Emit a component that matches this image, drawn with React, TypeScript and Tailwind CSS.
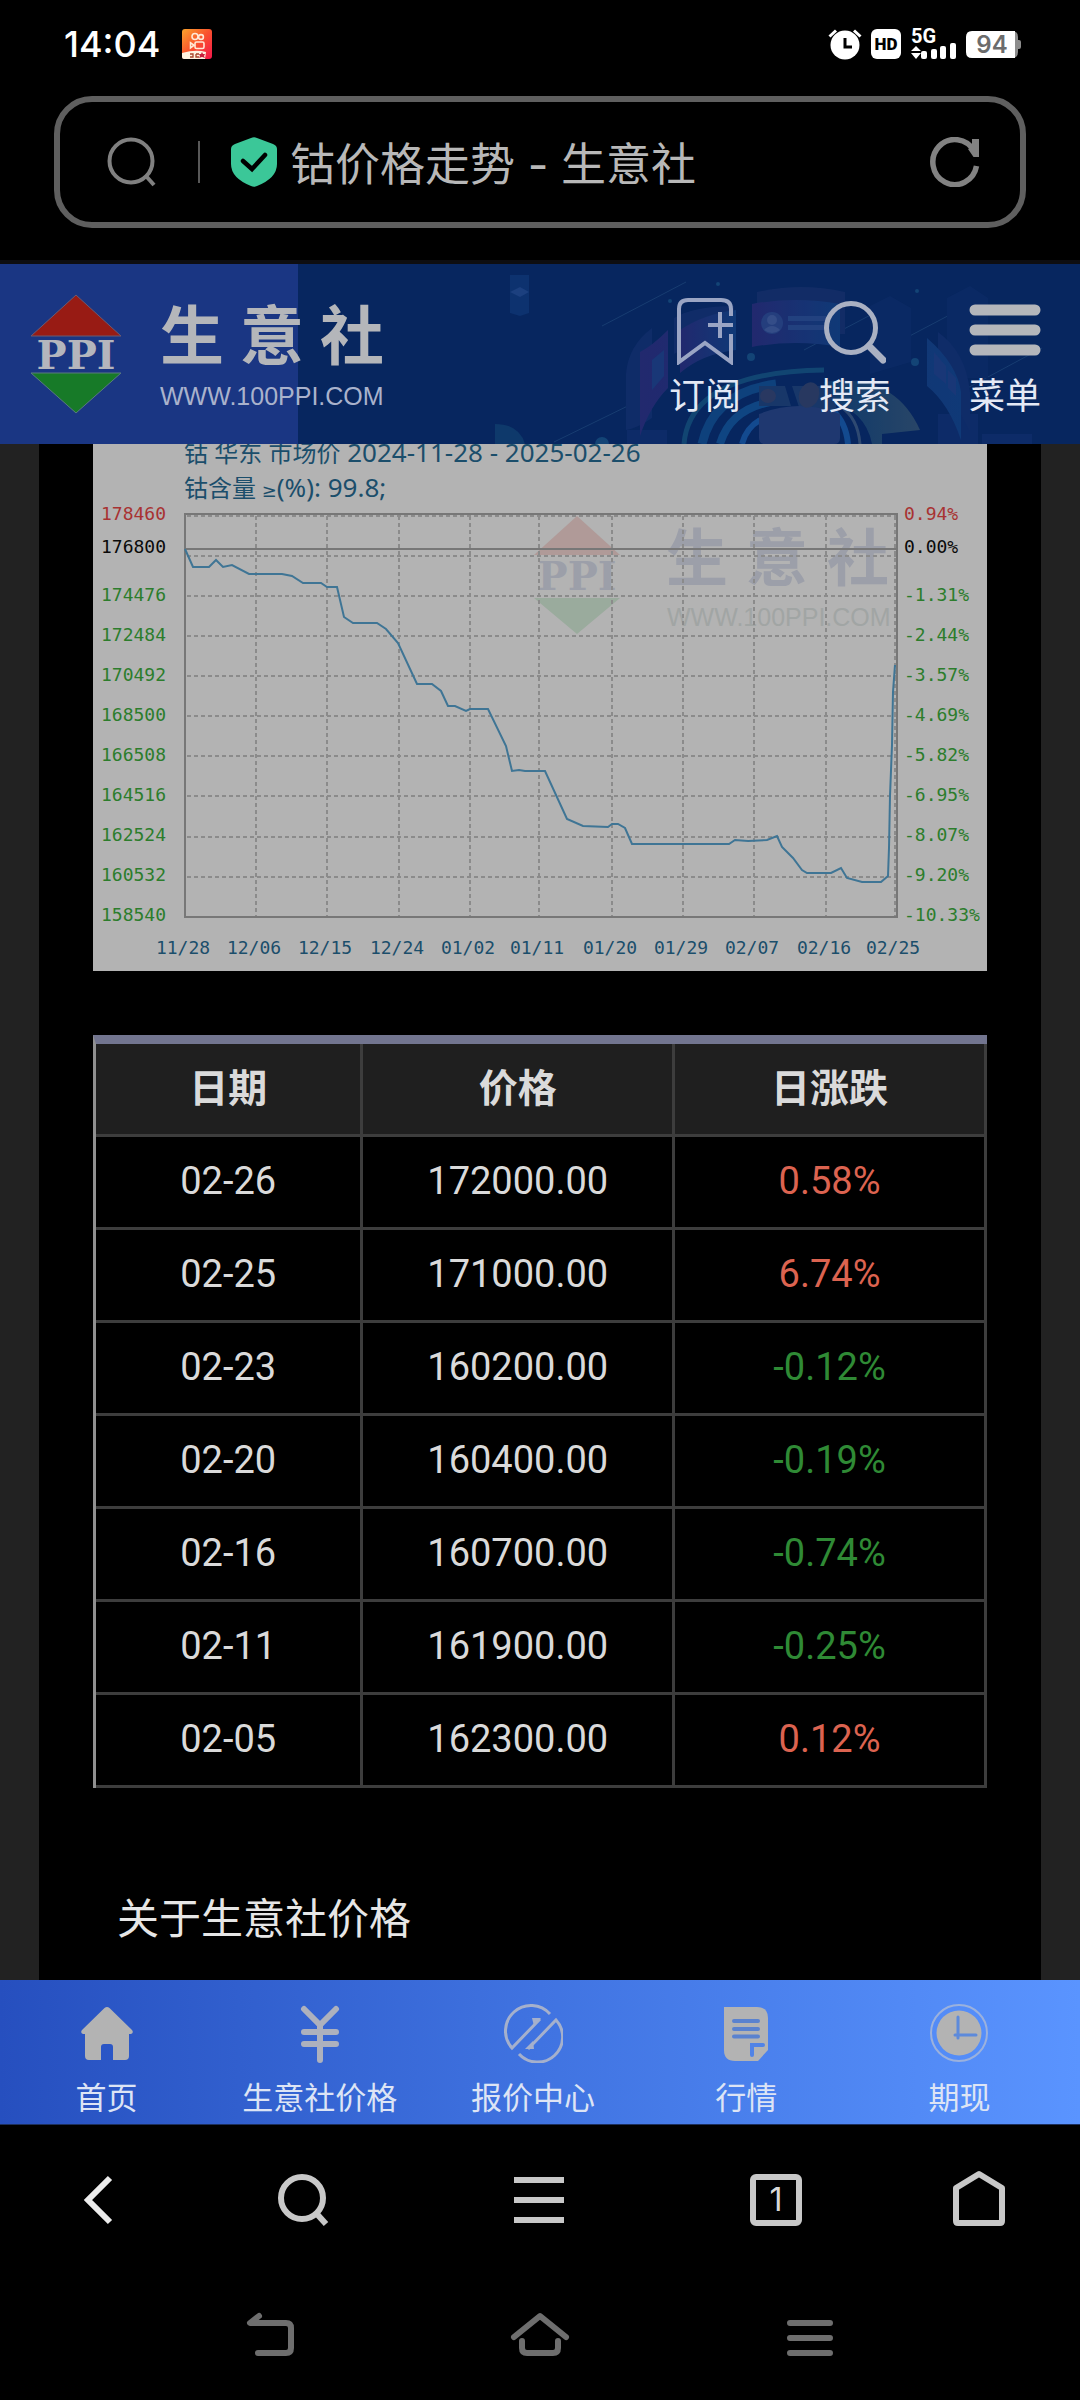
import type { ReactNode } from "react";

interface PriceRow {
  date: string;
  price: string;
  change: string;
}

const rows: PriceRow[] = [
  { date: "02-26", price: "172000.00", change: "0.58%" },
  { date: "02-25", price: "171000.00", change: "6.74%" },
  { date: "02-23", price: "160200.00", change: "-0.12%" },
  { date: "02-20", price: "160400.00", change: "-0.19%" },
  { date: "02-16", price: "160700.00", change: "-0.74%" },
  { date: "02-11", price: "161900.00", change: "-0.25%" },
  { date: "02-05", price: "162300.00", change: "0.12%" },
];

// y = text baseline inside the chart
const scaleLabels = [
  { price: "178460", percent: "0.94%", y: 76, color: "#a83232" },
  { price: "176800", percent: "0.00%", y: 109, color: "#0a0a0a" },
  { price: "174476", percent: "-1.31%", y: 157, color: "#2c7d2c" },
  { price: "172484", percent: "-2.44%", y: 197, color: "#2c7d2c" },
  { price: "170492", percent: "-3.57%", y: 237, color: "#2c7d2c" },
  { price: "168500", percent: "-4.69%", y: 277, color: "#2c7d2c" },
  { price: "166508", percent: "-5.82%", y: 317, color: "#2c7d2c" },
  { price: "164516", percent: "-6.95%", y: 357, color: "#2c7d2c" },
  { price: "162524", percent: "-8.07%", y: 397, color: "#2c7d2c" },
  { price: "160532", percent: "-9.20%", y: 437, color: "#2c7d2c" },
  { price: "158540", percent: "-10.33%", y: 477, color: "#2c7d2c" },
];

const dateLabels = [
  { label: "11/28", x: 92 },
  { label: "12/06", x: 163 },
  { label: "12/15", x: 234 },
  { label: "12/24", x: 306 },
  { label: "01/02", x: 377 },
  { label: "01/11", x: 446 },
  { label: "01/20", x: 519 },
  { label: "01/29", x: 590 },
  { label: "02/07", x: 661 },
  { label: "02/16", x: 733 },
  { label: "02/25", x: 802 },
];

const gridRows = [72, 112, 152, 192, 232, 272, 312, 352, 393, 433];

const pricePoints =
  "92,105 100,123 116,123 123,116 130,123 139,121 156,130 189,130 199,132 210,139 228,139 234,143 244,143 251,173 260,179 284,179 293,185 305,199 324,240 339,240 348,247 355,262 362,262 373,267 377,265 395,265 413,302 419,327 426,326 432,327 452,327 474,375 490,382 515,383 519,380 525,380 532,384 539,400 636,400 642,396 655,397 674,396 684,392 689,403 700,414 709,426 714,429 738,429 748,424 754,434 769,438 788,438 795,432 796,404 797,352 799,301 800,248 802,221";

function StatusBar() {
  return (
    <div className="flex h-[84px] items-center justify-between pr-[59px] pl-16 pt-1">
      <div className="flex items-center gap-[22px]">
        <span className="font-['Inter'] text-[36px] leading-none font-medium text-white">14:04</span>
        <svg className="h-[30px] w-[30px]" viewBox="0 0 30 30" fill="none">
          <defs>
            <linearGradient id="appIcon" x1="0" y1="0" x2="1" y2="1">
              <stop offset="0" stopColor="#fba42c" />
              <stop offset="0.5" stopColor="#f9502e" />
              <stop offset="1" stopColor="#f5174a" />
            </linearGradient>
          </defs>
          <rect width="30" height="30" rx="3" fill="url(#appIcon)" />
          <g stroke="#ffe9d6" strokeWidth="1.6">
            <circle cx="13" cy="7.5" r="3" />
            <circle cx="19" cy="8" r="2.4" />
            <rect x="13" y="13" width="9" height="6.5" rx="1.5" />
            <path d="M12 16.2 8.500 13.800v5z" />
          </g>
          <path d="M0 24q14-4 24-1l-1 7H2q-2 0-2-2z" fill="#fff3e0" />
          <path d="M8 25h3v3H8m6-3h3m-3 0v3h3" stroke="#a8452a" strokeWidth="1.300" />
          <path d="m20 23 1 2h2l-1 2 1 2-3-1-3 1 1-2-1-2h2z" fill="#c81f3a" />
        </svg>
      </div>

      <div className="flex items-center gap-[9px]">
        <svg className="h-8 w-[34px]" viewBox="0 0 34 32" fill="none">
          <circle cx="17" cy="17" r="14.500" fill="#fff" />
          <path d="M1.500 8.500 8 2.500M32.500 8.500 26 2.500" stroke="#fff" strokeWidth="3" />
          <path d="M17 10v9h7" stroke="#000" strokeWidth="3" />
        </svg>
        <svg className="h-[30px] w-[30px]" viewBox="0 0 30 30">
          <rect width="30" height="30" rx="6" fill="#fff" />
          <text x="15" y="21" textAnchor="middle" fontFamily="Roboto, sans-serif" fontSize="17" fontWeight="900">
            HD
          </text>
        </svg>
        <svg className="h-10 w-[47px]" viewBox="0 -4 47 40" fill="#fff">
          <text x="1" y="15" fontFamily="Roboto, sans-serif" fontSize="20" fontWeight="700">
            5G
          </text>
          <path d="m6 18 5 5H1zM1 25h10l-5 6z" />
          <rect x="11" y="23" width="6" height="8" rx="2" />
          <rect x="21" y="21" width="6" height="10" rx="2" />
          <rect x="30" y="18" width="6" height="13" rx="2" />
          <rect x="40" y="15" width="6" height="16" rx="2" />
        </svg>
        <svg className="h-[27px] w-[55px]" viewBox="0 0 55 27">
          <path d="M40 0h6q6 0 6 6v3h1q2 0 2 2v5q0 2-2 2h-1v3q0 6-6 6h-6z" fill="#8c8c8c" />
          <path d="M6 0h43v27H6q-6 0-6-6V6q0-6 6-6" fill="#fff" />
          <text x="26" y="22" textAnchor="middle" fill="#6c6c6c" fontFamily="Inter, sans-serif" fontSize="24" fontWeight="600">
            94
          </text>
        </svg>
      </div>
    </div>
  );
}

function AddressBar() {
  return (
    <div className="px-[54px] pt-3 pb-8">
      <div className="flex h-[132px] items-center rounded-[38px] border-[6px] border-[#5f5f5f] pr-[40px] pl-[47px]">
        <button aria-label="搜索网页">
          <svg className="h-[50px] w-[50px]" viewBox="0 0 50 50" fill="none" stroke="#808080" strokeWidth="4">
            <circle cx="24" cy="24" r="21.500" />
            <path d="m39 39 8 9" />
          </svg>
        </button>
        <span className="ml-[41px] h-[42px] w-0.5 bg-[#585858]" />
        <svg className="ml-[31px] h-[50px] w-[46px]" viewBox="0 0 46 50" fill="none">
          <path
            d="M20 1q3-1.500 6 0l16 6q4 1.500 4 5v15q0 14-20 22-3 1.500-6 0Q0 41 0 27V12q0-3.500 4-5z"
            fill="#3bc798"
          />
          <path d="m12 24 9 8 13-14" stroke="#000" strokeWidth="4.500" strokeLinecap="round" />
        </svg>
        <span className="ml-[13px] flex-1 pt-1 font-['Inter','Noto_Sans_CJK_SC',sans-serif] text-[45px] leading-none whitespace-nowrap text-[#b8b8b8]">
          钴价格走势 - 生意社
        </span>
        <button aria-label="刷新">
          <svg className="h-[50px] w-[50px]" viewBox="0 0 50 50" fill="none" stroke="#828282" strokeWidth="5.500">
            <path d="M46.500 29A22 22.500 0 1 1 44 14" />
            <path d="M42 2h7v18h-5.500L38 12l4-2z" fill="#828282" stroke="none" />
          </svg>
        </button>
      </div>
    </div>
  );
}

// Faint city / dashboard artwork behind the site header
function HeaderArt() {
  return (
    <svg className="absolute top-0 right-0 h-[180px] w-[600px] opacity-75" viewBox="0 0 600 180" fill="none">
      <defs>
        <linearGradient id="panel" x1="0" x2="1">
          <stop offset="0" stopColor="#2b2a74" />
          <stop offset="1" stopColor="#12407f" />
        </linearGradient>
        <linearGradient id="fan" x1="0" x2="1">
          <stop offset="0" stopColor="#0f4070" />
          <stop offset="1" stopColor="#34506a" />
        </linearGradient>
      </defs>
      <g stroke="#1d4477" strokeWidth="1">
        <path d="m122 62 84-44M74 178l86-42M324 86l76-40M422 76l76-40M480 128l82-44" />
      </g>
      <path d="M30 11h19v38l-9 3-10-3z" fill="#0f3675" />
      <path d="m30 28 10-5 9 5-9 5z" fill="#23498a" />
      <path d="M15 160q24 0 30 20H15z" fill="#11406f" />
      <path d="M390 42l20-10 21 12v54l-41 12zM467 34l23-12 18 12v80h-41z" fill="#0c2b66" />
      <path d="M147 166h40v14h-40zM458 150h40v30h-40zM502 170h50v10h-50z" fill="#102d6c" />
      <path d="M146 110q2-28 26-46v90q-14 10-26 12zM458 68q28 20 32 60v40l-32-60z" fill="#122e6c" />
      <path d="M160 88q12-6 28-22v58q-18 18-28 48zM447 74q30 26 34 54v48q-12-36-34-54z" fill="url(#panel)" />
      <path d="M172 96l12-10v26l-12 14zM454 88l12 14v18l-12-10zM468 106l8 8v18l-8-8z" fill="#1f3d80" />
      <path d="M194 54q20-12 60-12v34q-40 2-60 14z" fill="#142f6c" />
      <path d="M200 66q24-16 56-20v40q-34 4-56 23z" fill="url(#panel)" />
      <path d="M277 28q44-10 88 0v42h-88z" fill="#162f69" />
      <path d="M272 40q44-8 88 0v43q-44-8-88 0z" fill="url(#panel)" />
      <circle cx="292" cy="59" r="11" fill="#2e4788" />
      <circle cx="292" cy="56" r="5" fill="#445a96" />
      <path d="M284 66q8-8 16 0-8 6-16 0" fill="#445a96" />
      <path d="M308 52h38v5h-38zM308 61h38v5h-38z" fill="#2b4a8a" />
      <g strokeWidth="6">
        <path d="M204 180q6-72 140-74" stroke="#155079" strokeWidth="5" />
        <path d="M222 180q12-52 74-60" stroke="#114a86" strokeWidth="9" />
        <path d="M240 180q10-34 50-42" stroke="#12508e" strokeWidth="8" />
        <path d="M262 180q4-16 18-24" stroke="#1756a0" />
        <path d="M360 142q18 12 20 38" stroke="#3c5578" strokeWidth="3" />
        <path d="M352 146q14 12 16 34" stroke="#1756a0" />
      </g>
      <path d="M344 118q70-10 96 48l-38 4v10h-10q-6-34-48-46z" fill="url(#fan)" />
      <path d="M279 122h26l6 20h-32zM312 122h44v24h-36z" fill="#1e3d6d" />
      <path d="M279 150q40-16 81 0v24q0 6-6 6h-69q-6 0-6-6z" fill="#273f76" />
      <ellipse cx="288" cy="132" rx="8" ry="7" fill="#353f62" />
      <ellipse cx="329" cy="131" rx="10" ry="13" transform="rotate(20 329 131)" fill="#333f61" />
      <g fill="#174e7e">
        <circle cx="271" cy="93" r="4" />
        <circle cx="435" cy="98" r="4" />
        <circle cx="190" cy="37" r="2" />
        <circle cx="238" cy="20" r="2" />
        <circle cx="437" cy="27" r="2" />
        <circle cx="122" cy="180" r="7" />
      </g>
    </svg>
  );
}

function SiteHeader() {
  return (
    <header className="relative flex h-[180px] items-center bg-[#07265f]">
      <HeaderArt />
      <div className="absolute inset-y-0 left-0 w-[298px] bg-[#1a3683]" />
      <a href="#home" className="relative flex items-center pl-[30px]" aria-label="生意社 首页">
        <svg className="h-[120px] w-[92px]" viewBox="0 0 92 120">
          <path d="m46 1 45 41H1z" fill="#981b14" stroke="#6c5a70" />
          <text
            x="46"
            y="75"
            textAnchor="middle"
            fill="#b4b6bd"
            fontFamily="'DejaVu Serif', serif"
            fontSize="40"
            fontWeight="700"
          >
            PPI
          </text>
          <path d="M1 79h90l-45 40z" fill="#177a28" stroke="#5a7a80" />
        </svg>
        <span className="ml-[38px] flex flex-col gap-3 pt-1">
          <span className="flex gap-4 text-[64px] leading-[68px] font-bold text-[#b4b6ba]">
            <span>生</span>
            <span>意</span>
            <span>社</span>
          </span>
          <span className="font-['Liberation_Sans'] text-[25px] leading-6 text-[#a9b2cc]">WWW.100PPI.COM</span>
        </span>
      </a>

      <nav className="relative ml-auto flex gap-[78px] pt-2 pr-[39px] text-[36px] leading-[44px] text-[#e4e9f5]">
        <button className="flex flex-col items-center gap-[10px]">
          <svg className="h-[68px] w-[60px]" viewBox="0 0 60 68" fill="none" stroke="#9aa5c4" strokeWidth="4">
            <path d="M56 19v-7q0-9-10-9H13Q4 3 4 12v53l26-19 26 19V37" />
            <path d="M33 28h25M45 15v26" />
          </svg>
          订阅
        </button>
        <button className="flex flex-col items-center gap-[10px]">
          <svg className="h-[68px] w-[62px]" viewBox="0 0 62 68" fill="none" stroke="#aab1c3" strokeWidth="5">
            <circle cx="27" cy="31" r="24.500" />
            <path d="m45 49 14 14" strokeWidth="7" strokeLinecap="round" />
          </svg>
          搜索
        </button>
        <button className="flex flex-col items-center gap-[10px]">
          <svg className="h-[68px] w-[72px]" viewBox="0 0 72 68" stroke="#b4b6bb" strokeWidth="11" strokeLinecap="round">
            <path d="M6 13h60M6 33h60M6 53h60" />
          </svg>
          菜单
        </button>
      </nav>
    </header>
  );
}

function PriceChart() {
  return (
    <svg className="block w-full bg-[#b3b3b3]" viewBox="0 0 894 527" fill="none" role="img" aria-label="钴价格走势图">
      {/* watermark */}
      <path d="m484 72 43 39h-86z" fill="#b09a98" />
      <path d="M441 154h86l-43 36z" fill="#9aab9d" />
      <g fill="#9c9fa9">
        <text x="484" y="146" textAnchor="middle" fontFamily="'DejaVu Serif', serif" fontSize="40" fontWeight="700">
          PPI
        </text>
        <g fontFamily="'Noto Sans CJK SC', sans-serif" fontSize="62" fontWeight="700">
          <text x="573" y="137">生</text>
          <text x="653" y="137">意</text>
          <text x="734" y="137">社</text>
        </g>
      </g>
      <text x="574" y="182" fill="#a1a5a4" fontFamily="'Liberation Sans', sans-serif" fontSize="25">
        WWW.100PPI.COM
      </text>

      {/* grid */}
      <g stroke="#8b8b8b" strokeWidth="2" strokeDasharray="4 3">
        {gridRows.map((y) => (
          <path key={y} d={`M94 ${y}H804`} />
        ))}
        {dateLabels.slice(1).map(({ x }) => (
          <path key={x} d={`M${x} 72V473`} />
        ))}
      </g>
      <rect x="92" y="70" width="712" height="403" stroke="#777" strokeWidth="2" />
      <path d="M92 105H804" stroke="#777" strokeWidth="2" />
      <polyline points={pricePoints} stroke="#3f7595" strokeWidth="2" />

      <g fill="#1b4e6b" fontFamily="'Noto Sans', 'Noto Sans CJK SC', sans-serif" fontSize="26">
        <text x="91" y="18">
          <tspan fontSize="24">钴 华东 市场价</tspan> 2024-11-28 - 2025-02-26
        </text>
        <text x="91" y="53">
          <tspan fontSize="24">钴含量</tspan>
          <tspan fontFamily="'DejaVu Sans', sans-serif" fontSize="18">
            {" ≥"}
          </tspan>
          (%): 99.8;
        </text>
      </g>

      <g fontFamily="'DejaVu Sans Mono', monospace" fontSize="18">
        {scaleLabels.map((item) => (
          <g key={item.price} fill={item.color}>
            <text x="8" y={item.y}>
              {item.price}
            </text>
            <text x="811" y={item.y}>
              {item.percent}
            </text>
          </g>
        ))}
        {dateLabels.map(({ label, x }) => (
          <text key={label} x={x - 2} y="510" textAnchor="middle" fill="#1b4e6b">
            {label}
          </text>
        ))}
      </g>
    </svg>
  );
}

function PriceTable() {
  return (
    <div className="mt-16 border-t-[9px] border-l-[3px] border-t-[#72758f] border-l-[#909090]">
      <table className="w-full table-fixed border-separate border-spacing-0 text-center">
        <thead>
          <tr className="bg-[#1f1f1f] text-[39px] leading-[42px] text-[#dadada]">
            <th className="h-[93px] w-[30%] border-r-[3px] border-b-[3px] border-[#3d3d3d] font-bold">日期</th>
            <th className="border-r-[3px] border-b-[3px] border-[#3d3d3d] font-bold">价格</th>
            <th className="border-r-[3px] border-b-[3px] border-[#3d3d3d] font-bold">日涨跌</th>
          </tr>
        </thead>
        <tbody className="text-[38px] leading-[42px] text-[#dadada]">
          {rows.map((row) => (
            <tr key={row.date}>
              <td className="h-[93px] border-r-[3px] border-b-[3px] border-[#3d3d3d] pb-0.5">{row.date}</td>
              <td className="border-r-[3px] border-b-[3px] border-[#3d3d3d] pb-0.5">{row.price}</td>
              <td
                className={`border-r-[3px] border-b-[3px] border-[#3d3d3d] pb-0.5 ${
                  row.change.startsWith("-") ? "text-[#2f8a35]" : "text-[#dc6350]"
                }`}
              >
                {row.change}
              </td>
            </tr>
          ))}
        </tbody>
      </table>
    </div>
  );
}

function NavItem({ label, children }: { label: string; children: ReactNode }) {
  return (
    <a href="#nav" className="flex flex-col items-center gap-4 pt-[23px]">
      <svg className="h-[60px] w-[60px]" viewBox="0 0 60 60" fill="none">
        {children}
      </svg>
      <span className="text-[31px] leading-[40px] whitespace-nowrap text-[#dde4f5]">{label}</span>
    </a>
  );
}

function SiteNav() {
  return (
    <nav className="grid h-[145px] grid-cols-5 border-b border-[#1c2f5c] bg-linear-to-r from-[#264fbf] via-[#4073e1] to-[#5a94ff] pr-[14px]">
      <NavItem label="首页">
        <path
          d="M27.500 5q2.500-2 5 0L55 27q2 3-1 4h-2v22q0 4-4 4H36V44q0-3-3-3h-6q-3 0-3 3v13H12q-4 0-4-4V31H6q-3-1-1-4z"
          fill="#b3b3b3"
        />
      </NavItem>
      <NavItem label="生意社价格">
        <path
          d="M14 6l16 16L46 6M30 22v35M14 29h32M14 41h32"
          stroke="#adb1bd"
          strokeWidth="6"
          strokeLinecap="round"
        />
      </NavItem>
      <NavItem label="报价中心">
        <g stroke="#a5b0cc" strokeWidth="3">
          <path d="M47 11A25 25 0 0 0 9 45L37 16" />
          <path d="M16 51a25 25 0 0 0 37-34L25 46" />
        </g>
        <path d="M29 15h9L31 23zM31 46h-9l8-8z" fill="#a5b0cc" />
      </NavItem>
      <NavItem label="行情">
        <path d="M8 4h33q11 0 11 11v32L42 58H19Q8 58 8 47z" fill="#b3b3b3" />
        <path d="M18 18h24M18 26h24M18 33.500h24" stroke="#5a82cf" strokeWidth="4" strokeLinecap="round" />
        <path d="M36 52V42h11" stroke="#5183e6" strokeWidth="4" strokeLinecap="round" />
      </NavItem>
      <NavItem label="期现">
        <circle cx="30" cy="30" r="28" stroke="#9bb1dd" strokeWidth="2" />
        <circle cx="30" cy="30" r="22.500" fill="#b3b3b3" />
        <path d="M29 14v21M26 32h21" stroke="#5d8adb" strokeWidth="3" strokeLinecap="round" />
      </NavItem>
    </nav>
  );
}

function BrowserToolbar() {
  return (
    <nav className="grid h-[149px] grid-cols-[198fr_210fr_262fr_212fr_194fr] items-center justify-items-center pr-1">
      <button aria-label="后退">
        <svg className="h-14 w-14" viewBox="0 0 56 56" fill="none" stroke="#ececec" strokeWidth="6">
          <path d="M39 6 17 28l22 22" />
        </svg>
      </button>
      <button aria-label="搜索">
        <svg className="h-14 w-14" viewBox="0 0 56 56" fill="none" stroke="#c8c8c8" strokeWidth="6">
          <circle cx="27" cy="26" r="21" />
          <path d="m41 41 10 11" />
        </svg>
      </button>
      <button aria-label="浏览器菜单">
        <svg className="h-14 w-14" viewBox="0 0 56 56" stroke="#c8c8c8" strokeWidth="6">
          <path d="M3 8h50M3 28h50M3 48h50" />
        </svg>
      </button>
      <button
        aria-label="标签页"
        className="flex h-[52px] w-[52px] items-center justify-center rounded-md border-[6px] border-[#c8c8c8] font-['Inter'] text-[32px] leading-none text-[#d8d8d8]"
      >
        1
      </button>
      <button aria-label="浏览器主页">
        <svg className="h-[60px] w-14" viewBox="0 0 56 60" fill="none" stroke="#c8c8c8" strokeWidth="6" strokeLinejoin="round">
          <path d="M28 4 51 18v33q0 2-2 2H7q-2 0-2-2V18z" />
        </svg>
      </button>
    </nav>
  );
}

function SystemNav() {
  return (
    <nav className="grid h-[126px] grid-cols-3 items-center justify-items-center px-[135px] pb-1">
      <button aria-label="返回">
        <svg className="h-12 w-[52px]" viewBox="0 0 52 48" fill="none" stroke="#6e6e6e" strokeWidth="6" strokeLinecap="round">
          <path d="M15 5 6 12h36q5 0 5 5v20q0 5-5 5H14" strokeLinejoin="round" />
        </svg>
      </button>
      <button aria-label="主屏幕">
        <svg className="h-12 w-[60px]" viewBox="0 0 60 48" fill="none" stroke="#6e6e6e" strokeWidth="6" strokeLinecap="round">
          <path d="M4 26 30 5l26 21" strokeLinejoin="round" />
          <path d="M12 30v7q0 5 5 5h26q5 0 5-5v-7" />
        </svg>
      </button>
      <button aria-label="最近任务">
        <svg className="h-12 w-[52px]" viewBox="0 0 52 48" stroke="#6e6e6e" strokeWidth="6" strokeLinecap="round">
          <path d="M6 12h40M6 27h40M6 42h40" />
        </svg>
      </button>
    </nav>
  );
}

export default function App() {
  return (
    <div className="flex min-h-screen flex-col bg-black font-['Roboto','Noto_Sans_CJK_SC',sans-serif]">
      <StatusBar />
      <AddressBar />
      <div className="h-1 bg-[#0e0e11]" />
      <SiteHeader />
      <main className="flex flex-1 flex-col bg-[#222222] px-[39px]">
        <div className="flex-1 bg-black px-[54px] pb-7">
          <PriceChart />
          <PriceTable />
          <h2 className="mt-[102px] pl-6 text-[42px] leading-[60px] text-[#e6e6e6]">关于生意社价格</h2>
        </div>
      </main>
      <SiteNav />
      <BrowserToolbar />
      <SystemNav />
    </div>
  );
}
